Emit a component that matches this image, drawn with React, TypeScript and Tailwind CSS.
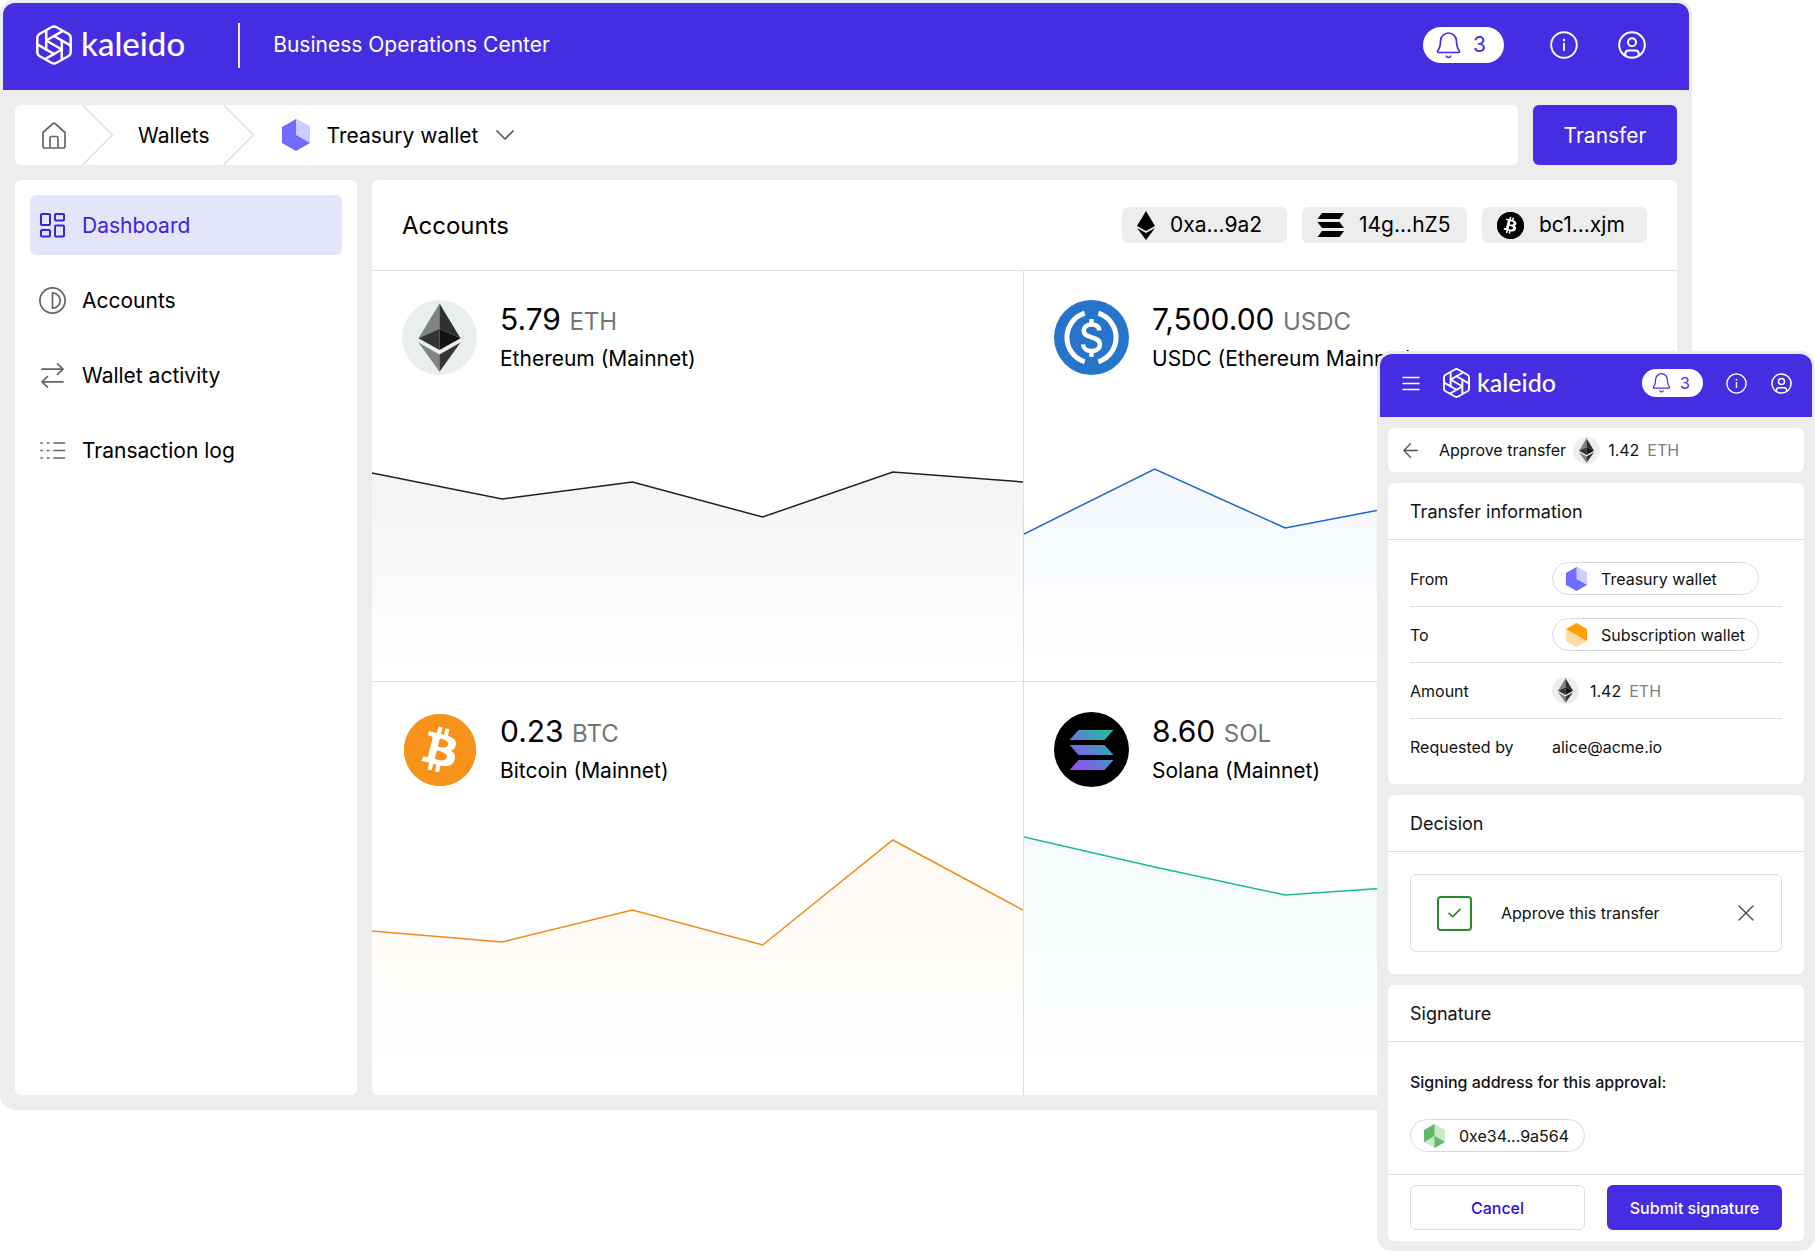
import React, { useState } from "react";
import { SiBitcoin } from "react-icons/si";

type IconProps = { className?: string };

function KaleidoMark({ className }: IconProps) {
  const blades = [0, 60, 120, 180, 240, 300];
  return (
    <svg viewBox="0 0 36 40" className={className} fill="none" stroke="currentColor" strokeWidth="2.5" strokeLinecap="round" strokeLinejoin="round" aria-hidden="true">
      <path d="M15.800 2Q18 .8 20.200 2L32.600 9Q34.700 10.300 34.700 12.700V27.300Q34.700 29.700 32.600 31L20.200 38Q18 39.200 15.800 38L3.400 31Q1.300 29.700 1.300 27.300V12.700Q1.300 10.300 3.400 9Z" />
      {blades.map((a) => (
        <path key={a} d="M10.200 24.500V6.200" transform={`rotate(${a} 18 20)`} />
      ))}
      <path d="M11 16 25 24" />
    </svg>
  );
}

function BellIcon({ className }: IconProps) {
  return (
    <svg viewBox="0 0 25 27" className={className} fill="none" stroke="currentColor" strokeWidth="1.7" strokeLinecap="round" strokeLinejoin="round" aria-hidden="true">
      <path d="M4.500 9a8 8 0 0 1 16 0c0 5 1 7.500 2.700 9.700.6.9.2 1.800-.8 1.800H2.600c-1 0-1.400-.9-.8-1.800C3.500 16.500 4.500 14 4.500 9z" />
      <path d="M10.300 24.200a2.500 2.500 0 0 0 4.400 0" />
    </svg>
  );
}

function InfoIcon({ className }: IconProps) {
  return (
    <svg viewBox="0 0 28 28" className={className} fill="none" stroke="currentColor" strokeWidth="1.9" strokeLinecap="round" aria-hidden="true">
      <circle cx="14" cy="14" r="12.800" />
      <path d="M14 12.800v6.400" />
      <circle cx="14" cy="9" r="1.200" fill="currentColor" stroke="none" />
    </svg>
  );
}

function UserIcon({ className }: IconProps) {
  return (
    <svg viewBox="0 0 28 28" className={className} fill="none" stroke="currentColor" strokeWidth="2" strokeLinejoin="round" aria-hidden="true">
      <circle cx="14" cy="14" r="12.800" />
      <circle cx="14" cy="11.300" r="4" />
      <path d="M7.300 24.500v-1.700c0-1.900 1.500-3.300 3.300-3.300h6.800c1.800 0 3.300 1.400 3.300 3.300v1.700" />
    </svg>
  );
}

function EthCoin({ className }: IconProps) {
  return (
    <svg viewBox="0 0 75 75" className={className} aria-hidden="true">
      <circle cx="37.500" cy="37.500" r="37.500" fill="#ebeeef" />
      <path d="M37.500 3.500 16.500 38.300 37.500 28.700z" fill="#828384" />
      <path d="M37.500 3.500 58.500 38.300 37.500 28.700z" fill="#2f3030" />
      <path d="M16.500 38.300 37.500 28.700V50z" fill="#343535" />
      <path d="M58.500 38.300 37.500 28.700V50z" fill="#131313" />
      <path d="M16.500 42.500 37.500 54.400v17.300z" fill="#828384" />
      <path d="M58.500 42.500 37.500 54.400v17.300z" fill="#343535" />
    </svg>
  );
}

function UsdcCoin({ className }: IconProps) {
  return (
    <svg viewBox="0 0 75 75" className={className} fill="none" stroke="#fff" strokeWidth="5" aria-hidden="true">
      <circle cx="37.500" cy="37.500" r="37.500" fill="#2775ca" stroke="none" />
      <path d="M30.700 13.200a25.500 25.500 0 0 0 0 48.600M44.300 13.200a25.500 25.500 0 0 1 0 48.600" />
      <path d="M45.500 30.500c-.6-3.700-3.500-5.900-7.900-5.900-4.700 0-7.800 2.400-7.800 6.100 0 8.800 16.100 4.500 16.100 13.700 0 4-3.400 6.600-8.400 6.600-4.900 0-8.100-2.500-8.500-6.600M37.500 19v5.500M37.500 51v6" strokeWidth="4.500" />
    </svg>
  );
}

function BtcCoin({ className }: IconProps) {
  return (
    <span className={`grid place-items-center ${className ?? ""}`}>
      <span className="grid size-[72px] place-items-center rounded-full bg-[radial-gradient(white_60%,#f7931a_62%)] text-[#f7931a]">
        <SiBitcoin className="size-[72px]" aria-hidden="true" />
      </span>
    </span>
  );
}

const solBars = ["M9 0H44L35 10H0z", "M0 15H35L44 25H9z", "M9 30H44L35 40H0z"];

function SolCoin({ className }: IconProps) {
  return (
    <svg viewBox="0 0 75 75" className={className} aria-hidden="true">
      <defs>
        <linearGradient id="sol" gradientUnits="userSpaceOnUse" x1="2" y1="40" x2="42" y2="0">
          <stop offset="0" stopColor="#9945ff" />
          <stop offset="0.5" stopColor="#5b82d0" />
          <stop offset="1" stopColor="#14c896" />
        </linearGradient>
      </defs>
      <circle cx="37.500" cy="37.500" r="37.500" fill="#000" />
      <g transform="translate(15.500 18)" fill="url(#sol)">
        {solBars.map((d) => (
          <path key={d} d={d} />
        ))}
      </g>
    </svg>
  );
}

function EthGlyph() {
  return (
    <svg viewBox="0 0 18 29" className="h-[29px] w-[18px]" aria-hidden="true">
      <path d="M9 0 0 15l9 5 9-5zM0 17l9 12 9-12-9 5z" />
    </svg>
  );
}

function SolGlyph() {
  return (
    <svg viewBox="0 0 27 24" className="h-6 w-[27px]" aria-hidden="true">
      <path d="M5 0h22l-4.500 6H.5zM.5 9h22l4.500 6H5zM5 18h22l-4.500 6H.5z" />
    </svg>
  );
}

function BtcGlyph() {
  return (
    <span className="grid size-[27px] place-items-center rounded-full bg-[radial-gradient(white_60%,black_62%)]">
      <SiBitcoin className="size-[27px] text-black" aria-hidden="true" />
    </span>
  );
}

function PurpleHex({ className }: IconProps) {
  return (
    <svg viewBox="0 0 28 32" className={className} aria-hidden="true">
      <path d="M14 0 28 8v16l-14 8L0 24V8z" fill="#6f6cff" />
      <path d="M14 0 28 8v16l-14-8z" fill="#cdccff" />
    </svg>
  );
}

function OrangeHex({ className }: IconProps) {
  return (
    <svg viewBox="0 0 28 32" className={className} aria-hidden="true">
      <path d="M14 0 28 8v16l-14 8L0 24V8z" fill="#ffdca3" />
      <path d="M14 0 28 8v16L0 8z" fill="#ff9f05" />
    </svg>
  );
}

function GreenHex({ className }: IconProps) {
  return (
    <svg viewBox="0 0 28 32" className={className} aria-hidden="true">
      <path d="M14 0 28 8v16l-14 8L0 24V8z" fill="#c8e8ca" />
      <path d="M14 0v16L0 24V8zM14 16l14 8-14 8z" fill="#63b967" />
    </svg>
  );
}

const iconStroke = {
  fill: "none",
  stroke: "currentColor",
  strokeWidth: 1.7,
  strokeLinecap: "round" as const,
  strokeLinejoin: "round" as const,
  viewBox: "0 0 27 27",
  className: "size-[27px] shrink-0",
};

const navItems = [
  {
    label: "Dashboard",
    icon: (
      <svg {...iconStroke} strokeWidth={2} aria-hidden="true">
        <rect x="2" y="2" width="9" height="11" rx="1" />
        <rect x="16" y="2" width="9" height="6.500" rx="1" />
        <rect x="2" y="18" width="9" height="6.500" rx="1" />
        <rect x="16" y="13.500" width="9" height="11" rx="1" />
      </svg>
    ),
  },
  {
    label: "Accounts",
    icon: (
      <svg {...iconStroke} aria-hidden="true">
        <circle cx="13.500" cy="13.500" r="12.600" />
        <path d="M13.500 5.800a7.700 7.700 0 0 1 0 15.400z" />
      </svg>
    ),
  },
  {
    label: "Wallet activity",
    icon: (
      <svg {...iconStroke} aria-hidden="true">
        <path d="M3 7.200h21M18.500 1.800 24 7.200l-5.500 5.200M24 19.800H3M8.500 14.600 3 19.800l5.500 5.400" />
      </svg>
    ),
  },
  {
    label: "Transaction log",
    icon: (
      <svg {...iconStroke} aria-hidden="true">
        <path d="M2 6h1.200M8.500 6h1.200M15 6h10.500M2 13.500h1.200M8.500 13.500h1.200M15 13.500h10.500M2 21h1.200M8.500 21h1.200M15 21h10.500" />
      </svg>
    ),
  },
];

type Account = {
  id: string;
  amount: string;
  unit: string;
  name: string;
  Coin: (p: IconProps) => React.ReactElement;
  color: string;
  tint: number;
  points: number[];
};

const accounts: Account[] = [
  { id: "eth", amount: "5.79", unit: "ETH", name: "Ethereum (Mainnet)", Coin: EthCoin, color: "#1f1f1f", tint: 0.05, points: [23, 49, 32, 67, 22, 32] },
  { id: "usdc", amount: "7,500.00", unit: "USDC", name: "USDC (Ethereum Mainnet)", Coin: UsdcCoin, color: "#1468cc", tint: 0.05, points: [84, 19, 78, 53, 64, 40] },
  { id: "btc", amount: "0.23", unit: "BTC", name: "Bitcoin (Mainnet)", Coin: BtcCoin, color: "#f28a16", tint: 0.05, points: [98, 109, 77, 112, 7, 77] },
  { id: "sol", amount: "8.60", unit: "SOL", name: "Solana (Mainnet)", Coin: SolCoin, color: "#1bb899", tint: 0.05, points: [4, 34, 62, 53, 70, 60] },
];

function Chart({ id, color, tint, points, height }: { id: string; color: string; tint: number; points: number[]; height: number }) {
  const line = points.map((y, i) => `${i * 130},${y}`).join(" ");
  return (
    <svg viewBox={`0 0 650 ${height}`} preserveAspectRatio="none" className="block w-full" style={{ height }} aria-hidden="true">
      <defs>
        <linearGradient id={`fade-${id}`} x1="0" y1="0" x2="0" y2="1">
          <stop offset="0" stopColor={color} stopOpacity={tint} />
          <stop offset="1" stopColor={color} stopOpacity="0" />
        </linearGradient>
      </defs>
      <polygon points={`0,${height} ${line} 650,${height}`} fill={`url(#fade-${id})`} />
      <polyline points={line} fill="none" stroke={color} strokeWidth="1.500" vectorEffect="non-scaling-stroke" />
    </svg>
  );
}

function AccountCell({ account, index }: { account: Account; index: number }) {
  const { Coin, amount, unit, name, id, color, tint, points } = account;
  const lower = index > 1;
  return (
    <article className={`flex flex-col justify-between border-[#dddddd] ${index % 2 ? "" : "border-r"} ${lower ? "pt-[30px]" : "border-b pt-[29px]"}`}>
      <div className="flex gap-[23px] px-[30px]">
        <Coin className="size-[75px] shrink-0" />
        <div>
          <p className="text-[30px] leading-[39px]">
            {amount} <span className="text-2xl text-[#757575]">{unit}</span>
          </p>
          <p className="mt-1.5 text-[21px] leading-7">{name}</p>
        </div>
      </div>
      <Chart id={id} color={color} tint={tint} points={points} height={lower ? 262 : 231} />
    </article>
  );
}

const chips = [
  { text: "0xa...9a2", icon: <EthGlyph /> },
  { text: "14g...hZ5", icon: <SolGlyph /> },
  { text: "bc1...xjm", icon: <BtcGlyph /> },
];

function CrumbArrow() {
  return (
    <svg viewBox="0 0 31 60" className="h-[60px] w-[31px] shrink-0" fill="none" stroke="#dddddd" strokeWidth="1.500" aria-hidden="true">
      <path d="M.5 0 30.500 30 .5 60" />
    </svg>
  );
}

function OperationsWindow() {
  const [active, setActive] = useState("Dashboard");
  return (
    <div className="mr-[123px] self-start rounded-[15px] border-[3px] border-[#ededed] bg-[#ededed]">
      <header className="flex h-[87px] items-center rounded-t-xl bg-[#462de1] pr-[43px] pb-[3px] pl-[33px] text-white">
        <a href="#home" className="flex items-center gap-[9px]">
          <KaleidoMark className="h-10 w-9" />
          <span className="pb-1 font-[Lato] text-[33px] leading-10 font-medium">kaleido</span>
        </a>
        <div className="ml-[53px] h-[45px] w-[2px] bg-white/90" />
        <h1 className="ml-[33px] text-[21px]">Business Operations Center</h1>
        <button type="button" aria-label="3 notifications" className="ml-auto flex h-9 w-[81px] items-center gap-[12px] rounded-full bg-white pl-[13px] text-[21px] text-[#462de1]">
          <BellIcon className="h-[27px] w-[25px]" />3
        </button>
        <button type="button" aria-label="Information" className="ml-[46px]">
          <InfoIcon className="size-7" />
        </button>
        <button type="button" aria-label="Profile" className="ml-10">
          <UserIcon className="size-7" />
        </button>
      </header>

      <div className="flex flex-col gap-[15px] px-3 pt-[15px] pb-3">
        <div className="flex gap-[15px]">
          <nav aria-label="Breadcrumb" className="flex h-[60px] flex-1 items-center rounded-md bg-white text-[21px]">
            <a href="#home" aria-label="Home" className="mr-4 ml-[27px] text-[#666666]">
              <svg viewBox="0 0 24 27" className="h-[27px] w-6" fill="none" stroke="currentColor" strokeWidth="1.700" strokeLinejoin="round" aria-hidden="true">
                <path d="M1 10.500 11 1.500q1-.8 2 0l10 9V24q0 2-2 2H3q-2 0-2-2z" />
                <path d="M8 26V16q0-1.500 1.500-1.500h5q1.500 0 1.500 1.500v10" />
              </svg>
            </a>
            <CrumbArrow />
            <a href="#wallets" className="mr-[13px] ml-[25px] pt-0.5">Wallets</a>
            <CrumbArrow />
            <button type="button" className="ml-[28px] flex items-center">
              <PurpleHex className="mr-[17px] h-8 w-7" />
              <span className="pt-0.5">Treasury wallet</span>
              <svg viewBox="0 0 18 10" className="ml-[18px] h-2.5 w-[18px] text-[#555555]" fill="none" stroke="currentColor" strokeWidth="1.700" strokeLinecap="round" strokeLinejoin="round" aria-hidden="true">
                <path d="M1 1l8 8 8-8" />
              </svg>
            </button>
          </nav>
          <button type="button" className="w-36 rounded-md bg-[#462de1] pt-0.5 text-[21px] text-white">Transfer</button>
        </div>

        <div className="flex gap-[15px]">
          <nav aria-label="Wallet" className="flex w-[342px] shrink-0 flex-col gap-[15px] rounded-md bg-white p-[15px]">
            {navItems.map(({ label, icon }) => (
              <button
                key={label}
                type="button"
                onClick={() => setActive(label)}
                className={`flex h-[60px] items-center gap-4 rounded-md pl-[9px] text-left text-[21px] ${active === label ? "bg-[#e4e4fa] text-[#3f22dc]" : ""}`}
              >
                <span className={active === label ? "" : "text-[#666666]"}>{icon}</span>
                <span className="pt-0.5">{label}</span>
              </button>
            ))}
          </nav>

          <main className="flex-1 overflow-hidden rounded-md bg-white">
            <div className="flex h-[91px] items-center gap-[15px] border-b border-[#dddddd] px-[30px]">
              <h2 className="mr-auto pt-0.5 text-2xl">Accounts</h2>
              {chips.map(({ text, icon }) => (
                <button key={text} type="button" className="flex h-9 w-[165px] items-center gap-[15px] rounded-md bg-[#ededed] pl-[15px] text-[21px]">
                  {icon}
                  {text}
                </button>
              ))}
            </div>
            <div className="grid grid-cols-[652fr_653fr] grid-rows-[411px_413px]">
              {accounts.map((account, i) => (
                <AccountCell key={account.id} account={account} index={i} />
              ))}
            </div>
          </main>
        </div>
      </div>
    </div>
  );
}

function PanelCard({ title, children }: { title: string; children: React.ReactNode }) {
  return (
    <section className="rounded-md bg-white">
      <h3 className="flex h-[57px] items-center border-b border-[#dddddd] px-[22px] pt-0.5 text-lg">{title}</h3>
      {children}
    </section>
  );
}

function WalletPill({ icon, children, className }: { icon: React.ReactNode; children: React.ReactNode; className: string }) {
  return (
    <button type="button" className={`flex h-[33px] items-center gap-[14px] rounded-full border border-[#d9d9d9] pl-[13px] ${className}`}>
      {icon}
      {children}
    </button>
  );
}

const transferRows = [
  {
    label: "From",
    value: <WalletPill className="w-[207px]" icon={<PurpleHex className="h-6 w-[21px]" />}>Treasury wallet</WalletPill>,
  },
  {
    label: "To",
    value: <WalletPill className="w-[207px]" icon={<OrangeHex className="h-6 w-[21px]" />}>Subscription wallet</WalletPill>,
  },
  {
    label: "Amount",
    value: (
      <>
        <EthCoin className="mr-[11px] size-[27px]" />
        1.42<span className="ml-2 text-[#808080]">ETH</span>
      </>
    ),
  },
  { label: "Requested by", value: "alice@acme.io" },
];

function ApprovalPanel() {
  const [approved, setApproved] = useState(true);
  return (
    <aside aria-label="Approve transfer" className="mt-[351px] w-[438px] self-start justify-self-end rounded-[15px] border-[3px] border-[#ededed] bg-[#ededed] text-base text-[#111111]">
      <header className="flex h-[63px] items-center rounded-t-xl bg-[#462de1] pr-5 pb-[5px] pl-[22px] text-white">
        <button type="button" aria-label="Menu">
          <svg viewBox="0 0 18 15" className="h-[15px] w-[18px]" stroke="currentColor" strokeWidth="1.400" strokeLinecap="round" aria-hidden="true">
            <path d="M1 1.500h16M1 7.500h16M1 13.500h16" />
          </svg>
        </button>
        <a href="#home" className="ml-[23px] flex items-center gap-[7px]">
          <KaleidoMark className="h-[30px] w-[27px]" />
          <span className="pb-[3px] font-[Lato] text-[25px] leading-[30px] font-medium">kaleido</span>
        </a>
        <button type="button" aria-label="3 notifications" className="ml-auto flex h-7 w-[61px] items-center gap-[9px] rounded-full bg-white pl-[10px] text-[#462de1]">
          <BellIcon className="h-5 w-[19px]" />3
        </button>
        <button type="button" aria-label="Information" className="ml-[23px]">
          <InfoIcon className="size-[21px]" />
        </button>
        <button type="button" aria-label="Profile" className="ml-6">
          <UserIcon className="size-[21px]" />
        </button>
      </header>

      <div className="flex flex-col gap-[11px] px-2 pt-[11px] pb-[7px]">
        <div className="flex h-[44px] items-center rounded-md bg-white pl-[15px]">
          <button type="button" aria-label="Back" className="text-[#555555]">
            <svg viewBox="0 0 15 15" className="size-[15px]" fill="none" stroke="currentColor" strokeWidth="1.300" strokeLinecap="round" strokeLinejoin="round" aria-hidden="true">
              <path d="M14.300 7.500H.8M7.500 .8.8 7.500l6.700 6.700" />
            </svg>
          </button>
          <h2 className="ml-[21px]">Approve transfer</h2>
          <EthCoin className="mr-2 ml-[7px] size-[27px]" />
          1.42<span className="ml-2 text-[#808080]">ETH</span>
        </div>

        <PanelCard title="Transfer information">
          <dl className="divide-y divide-[#dddddd] px-[22px] pt-[11px] pb-[9px]">
            {transferRows.map(({ label, value }) => (
              <div key={label} className="flex h-[56px] items-center">
                <dt className="w-[142px]">{label}</dt>
                <dd className="flex items-center">{value}</dd>
              </div>
            ))}
          </dl>
        </PanelCard>

        <PanelCard title="Decision">
          <div className="p-[22px]">
            <div className="flex h-[78px] items-center rounded-md border border-[#dddddd] pr-[27px] pl-[26px]">
              <label className="flex items-center gap-[29px]">
                <span className="grid size-[35px] place-items-center">
                  <input
                    type="checkbox"
                    checked={approved}
                    onChange={(e) => setApproved(e.target.checked)}
                    className="peer col-start-1 row-start-1 size-[35px] appearance-none rounded-[4px] border-2 border-[#2a8a2e]"
                  />
                  <svg viewBox="0 0 13 10" className="invisible col-start-1 row-start-1 h-2.5 w-[13px] text-[#0d7a12] peer-checked:visible" fill="none" stroke="currentColor" strokeWidth="1.500" strokeLinecap="round" strokeLinejoin="round" aria-hidden="true">
                    <path d="M1 5.200 4.700 8.800 12 1.200" />
                  </svg>
                </span>
                Approve this transfer
              </label>
              <button type="button" aria-label="Clear decision" className="ml-auto text-[#444444]">
                <svg viewBox="0 0 16 16" className="size-4" stroke="currentColor" strokeWidth="1.400" strokeLinecap="round" aria-hidden="true">
                  <path d="M1 1l14 14M15 1L1 15" />
                </svg>
              </button>
            </div>
          </div>
        </PanelCard>

        <PanelCard title="Signature">
          <div className="px-[22px] pt-[29px] pb-[22px]">
            <p className="mb-[26px] leading-[22px] font-medium">Signing address for this approval:</p>
            <WalletPill className="w-[175px]" icon={<GreenHex className="h-6 w-[21px]" />}>0xe34...9a564</WalletPill>
          </div>
          <div className="grid grid-cols-2 gap-[22px] border-t border-[#dddddd] px-[22px] pt-2.5 pb-[11px]">
            <button type="button" className="h-[45px] rounded-md border border-[#dddddd] font-medium text-[#2f10dc]">Cancel</button>
            <button type="button" className="h-[45px] rounded-md bg-[#462de1] font-medium text-white">Submit signature</button>
          </div>
        </PanelCard>
      </div>
    </aside>
  );
}

export default function App() {
  return (
    <div className="grid bg-white font-[Inter,sans-serif] text-black [&>*]:col-start-1 [&>*]:row-start-1">
      <OperationsWindow />
      <ApprovalPanel />
    </div>
  );
}
